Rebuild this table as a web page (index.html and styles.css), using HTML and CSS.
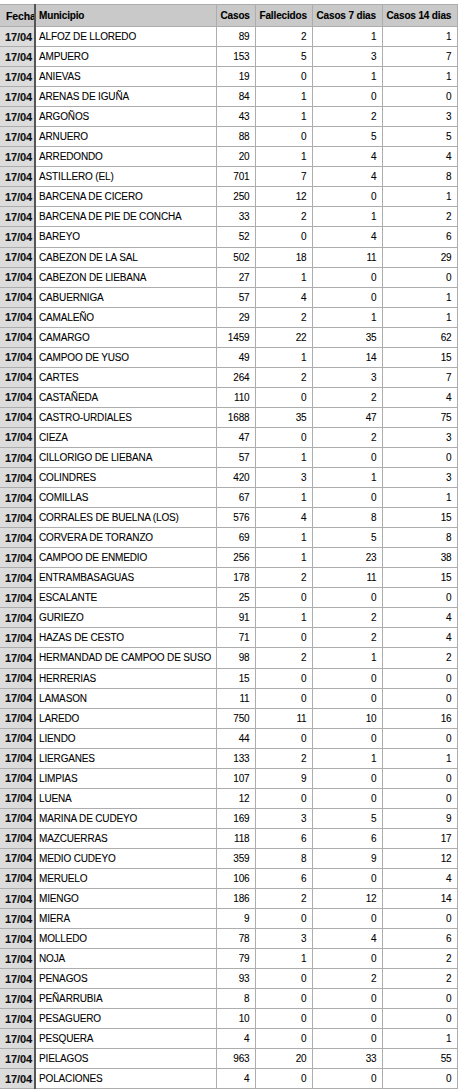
FILE: index.html
```html
<!DOCTYPE html>
<html lang="es">
<head>
<meta charset="utf-8">
<title>Casos por municipio</title>
<link rel="stylesheet" href="styles.css">
</head>
<body>
<table class="grid">
<colgroup>
<col class="c-fecha"><col class="c-mun"><col class="c-casos"><col class="c-fall"><col class="c-c7"><col class="c-c14">
</colgroup>
<thead>
<tr><th class="fecha">Fecha</th><th>Municipio</th><th>Casos</th><th>Fallecidos</th><th>Casos 7 dias</th><th>Casos 14 dias</th></tr>
</thead>
<tbody>
<tr><td class="fecha">17/04</td><td class="mun">ALFOZ DE LLOREDO</td><td>89</td><td>2</td><td>1</td><td>1</td></tr>
<tr><td class="fecha">17/04</td><td class="mun">AMPUERO</td><td>153</td><td>5</td><td>3</td><td>7</td></tr>
<tr><td class="fecha">17/04</td><td class="mun">ANIEVAS</td><td>19</td><td>0</td><td>1</td><td>1</td></tr>
<tr><td class="fecha">17/04</td><td class="mun">ARENAS DE IGUÑA</td><td>84</td><td>1</td><td>0</td><td>0</td></tr>
<tr><td class="fecha">17/04</td><td class="mun">ARGOÑOS</td><td>43</td><td>1</td><td>2</td><td>3</td></tr>
<tr><td class="fecha">17/04</td><td class="mun">ARNUERO</td><td>88</td><td>0</td><td>5</td><td>5</td></tr>
<tr><td class="fecha">17/04</td><td class="mun">ARREDONDO</td><td>20</td><td>1</td><td>4</td><td>4</td></tr>
<tr><td class="fecha">17/04</td><td class="mun">ASTILLERO (EL)</td><td>701</td><td>7</td><td>4</td><td>8</td></tr>
<tr><td class="fecha">17/04</td><td class="mun">BARCENA DE CICERO</td><td>250</td><td>12</td><td>0</td><td>1</td></tr>
<tr><td class="fecha">17/04</td><td class="mun">BARCENA DE PIE DE CONCHA</td><td>33</td><td>2</td><td>1</td><td>2</td></tr>
<tr><td class="fecha">17/04</td><td class="mun">BAREYO</td><td>52</td><td>0</td><td>4</td><td>6</td></tr>
<tr><td class="fecha">17/04</td><td class="mun">CABEZON DE LA SAL</td><td>502</td><td>18</td><td>11</td><td>29</td></tr>
<tr><td class="fecha">17/04</td><td class="mun">CABEZON DE LIEBANA</td><td>27</td><td>1</td><td>0</td><td>0</td></tr>
<tr><td class="fecha">17/04</td><td class="mun">CABUERNIGA</td><td>57</td><td>4</td><td>0</td><td>1</td></tr>
<tr><td class="fecha">17/04</td><td class="mun">CAMALEÑO</td><td>29</td><td>2</td><td>1</td><td>1</td></tr>
<tr><td class="fecha">17/04</td><td class="mun">CAMARGO</td><td>1459</td><td>22</td><td>35</td><td>62</td></tr>
<tr><td class="fecha">17/04</td><td class="mun">CAMPOO DE YUSO</td><td>49</td><td>1</td><td>14</td><td>15</td></tr>
<tr><td class="fecha">17/04</td><td class="mun">CARTES</td><td>264</td><td>2</td><td>3</td><td>7</td></tr>
<tr><td class="fecha">17/04</td><td class="mun">CASTAÑEDA</td><td>110</td><td>0</td><td>2</td><td>4</td></tr>
<tr><td class="fecha">17/04</td><td class="mun">CASTRO-URDIALES</td><td>1688</td><td>35</td><td>47</td><td>75</td></tr>
<tr><td class="fecha">17/04</td><td class="mun">CIEZA</td><td>47</td><td>0</td><td>2</td><td>3</td></tr>
<tr><td class="fecha">17/04</td><td class="mun">CILLORIGO DE LIEBANA</td><td>57</td><td>1</td><td>0</td><td>0</td></tr>
<tr><td class="fecha">17/04</td><td class="mun">COLINDRES</td><td>420</td><td>3</td><td>1</td><td>3</td></tr>
<tr><td class="fecha">17/04</td><td class="mun">COMILLAS</td><td>67</td><td>1</td><td>0</td><td>1</td></tr>
<tr><td class="fecha">17/04</td><td class="mun">CORRALES DE BUELNA (LOS)</td><td>576</td><td>4</td><td>8</td><td>15</td></tr>
<tr><td class="fecha">17/04</td><td class="mun">CORVERA DE TORANZO</td><td>69</td><td>1</td><td>5</td><td>8</td></tr>
<tr><td class="fecha">17/04</td><td class="mun">CAMPOO DE ENMEDIO</td><td>256</td><td>1</td><td>23</td><td>38</td></tr>
<tr><td class="fecha">17/04</td><td class="mun">ENTRAMBASAGUAS</td><td>178</td><td>2</td><td>11</td><td>15</td></tr>
<tr><td class="fecha">17/04</td><td class="mun">ESCALANTE</td><td>25</td><td>0</td><td>0</td><td>0</td></tr>
<tr><td class="fecha">17/04</td><td class="mun">GURIEZO</td><td>91</td><td>1</td><td>2</td><td>4</td></tr>
<tr><td class="fecha">17/04</td><td class="mun">HAZAS DE CESTO</td><td>71</td><td>0</td><td>2</td><td>4</td></tr>
<tr><td class="fecha">17/04</td><td class="mun">HERMANDAD DE CAMPOO DE SUSO</td><td>98</td><td>2</td><td>1</td><td>2</td></tr>
<tr><td class="fecha">17/04</td><td class="mun">HERRERIAS</td><td>15</td><td>0</td><td>0</td><td>0</td></tr>
<tr><td class="fecha">17/04</td><td class="mun">LAMASON</td><td>11</td><td>0</td><td>0</td><td>0</td></tr>
<tr><td class="fecha">17/04</td><td class="mun">LAREDO</td><td>750</td><td>11</td><td>10</td><td>16</td></tr>
<tr><td class="fecha">17/04</td><td class="mun">LIENDO</td><td>44</td><td>0</td><td>0</td><td>0</td></tr>
<tr><td class="fecha">17/04</td><td class="mun">LIERGANES</td><td>133</td><td>2</td><td>1</td><td>1</td></tr>
<tr><td class="fecha">17/04</td><td class="mun">LIMPIAS</td><td>107</td><td>9</td><td>0</td><td>0</td></tr>
<tr><td class="fecha">17/04</td><td class="mun">LUENA</td><td>12</td><td>0</td><td>0</td><td>0</td></tr>
<tr><td class="fecha">17/04</td><td class="mun">MARINA DE CUDEYO</td><td>169</td><td>3</td><td>5</td><td>9</td></tr>
<tr><td class="fecha">17/04</td><td class="mun">MAZCUERRAS</td><td>118</td><td>6</td><td>6</td><td>17</td></tr>
<tr><td class="fecha">17/04</td><td class="mun">MEDIO CUDEYO</td><td>359</td><td>8</td><td>9</td><td>12</td></tr>
<tr><td class="fecha">17/04</td><td class="mun">MERUELO</td><td>106</td><td>6</td><td>0</td><td>4</td></tr>
<tr><td class="fecha">17/04</td><td class="mun">MIENGO</td><td>186</td><td>2</td><td>12</td><td>14</td></tr>
<tr><td class="fecha">17/04</td><td class="mun">MIERA</td><td>9</td><td>0</td><td>0</td><td>0</td></tr>
<tr><td class="fecha">17/04</td><td class="mun">MOLLEDO</td><td>78</td><td>3</td><td>4</td><td>6</td></tr>
<tr><td class="fecha">17/04</td><td class="mun">NOJA</td><td>79</td><td>1</td><td>0</td><td>2</td></tr>
<tr><td class="fecha">17/04</td><td class="mun">PENAGOS</td><td>93</td><td>0</td><td>2</td><td>2</td></tr>
<tr><td class="fecha">17/04</td><td class="mun">PEÑARRUBIA</td><td>8</td><td>0</td><td>0</td><td>0</td></tr>
<tr><td class="fecha">17/04</td><td class="mun">PESAGUERO</td><td>10</td><td>0</td><td>0</td><td>0</td></tr>
<tr><td class="fecha">17/04</td><td class="mun">PESQUERA</td><td>4</td><td>0</td><td>0</td><td>1</td></tr>
<tr><td class="fecha">17/04</td><td class="mun">PIELAGOS</td><td>963</td><td>20</td><td>33</td><td>55</td></tr>
<tr><td class="fecha">17/04</td><td class="mun">POLACIONES</td><td>4</td><td>0</td><td>0</td><td>0</td></tr>
</tbody>
</table>
</body>
</html>
```
FILE: styles.css
```css
html, body {
  margin: 0;
  padding: 0;
  background: #ffffff;
}
body {
  font-family: "Liberation Sans", Arial, Helvetica, sans-serif;
  font-size: 10px;
  letter-spacing: -0.15px;
  color: #000;
  overflow: hidden;
  -webkit-text-stroke: 0.08px #000;
}
.grid {
  border-collapse: collapse;
  table-layout: fixed;
  width: 457px;
  margin-top: 4px;
}
.c-fecha { width: 35px; }
.c-mun { width: 181px; }
.c-casos { width: 39px; }
.c-fall { width: 57px; }
.c-c7 { width: 70px; }
.c-c14 { width: 75px; }

.grid th,
.grid td {
  border: 1px solid #adadad;
  padding: 0 4px;
  white-space: nowrap;
  overflow: hidden;
  vertical-align: middle;
  text-overflow: clip;
}
.grid thead tr { height: 22px; }
.grid tbody tr { height: 20.05px; }
.grid th {
  background: #c9c9c9;
  font-weight: bold;
  text-align: left;
  color: #000;
  -webkit-text-stroke: 0.12px #000;
}
.grid td {
  text-align: right;
  padding-right: 5px;
}
.grid td.mun {
  text-align: left;
  padding-left: 3px;
}
.grid .fecha {
  text-align: left;
  padding-left: 6px;
  padding-right: 0;
  font-weight: bold;
  border-left: 0;
  border-right: 2px solid #555555;
}
.grid th.fecha {
  font-size: 10.5px;
}
.grid td.fecha {
  background: #dcdcdc;
  font-size: 11px;
  padding-left: 5px;
  letter-spacing: -0.1px;
  color: #111;
  -webkit-text-stroke: 0.12px #111;
}
.grid th.fecha + th { padding-left: 3px; }
```
